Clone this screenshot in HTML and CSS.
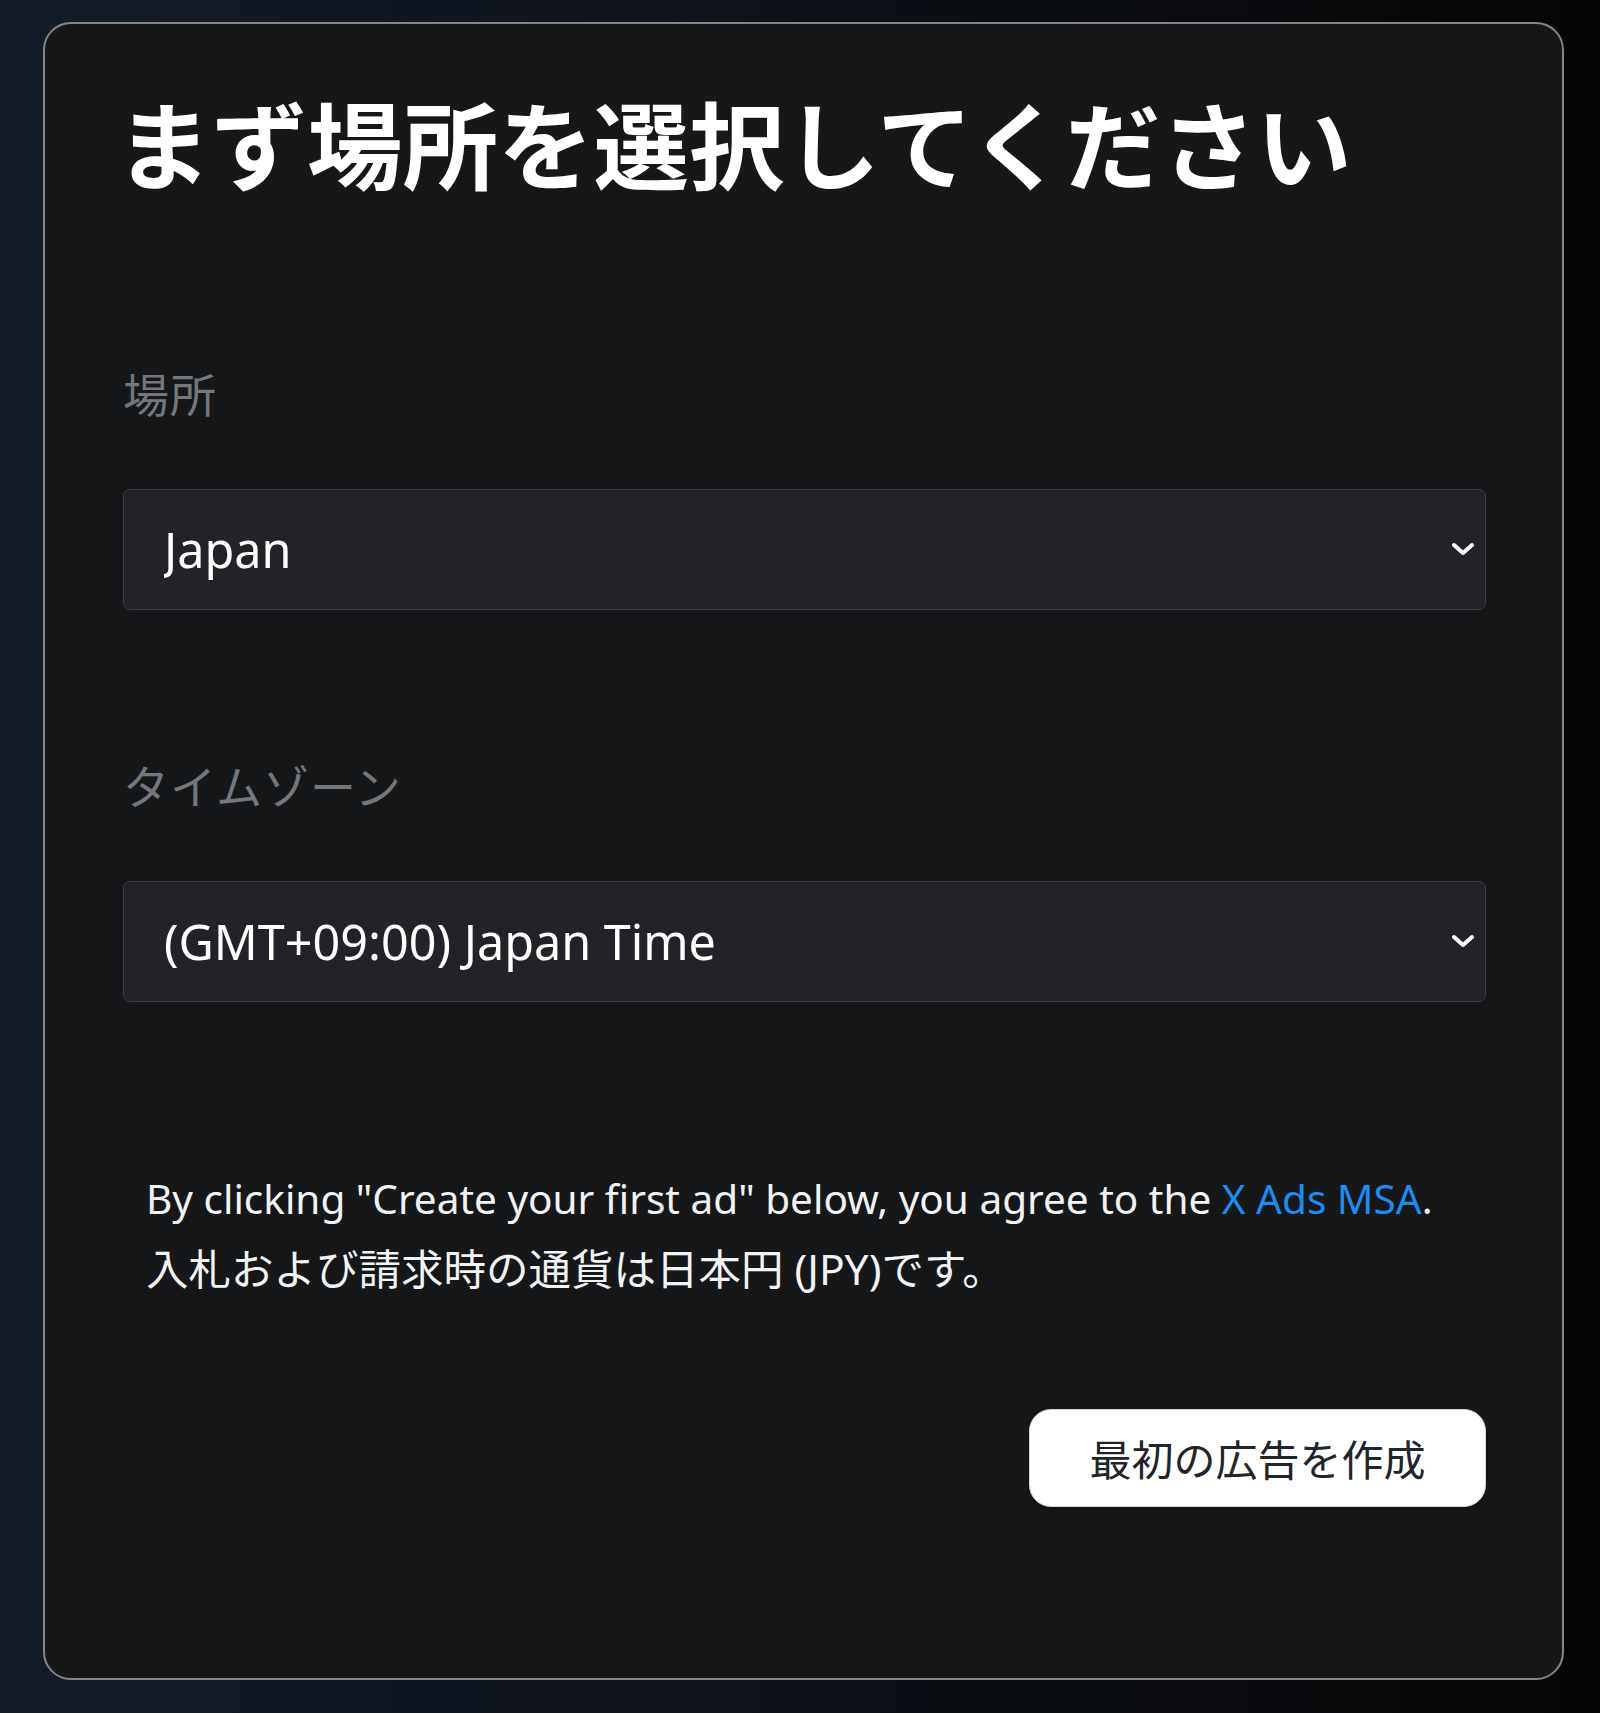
FILE: index.html
```html
<!DOCTYPE html>
<html lang="ja">
<head>
    <meta charset="UTF-8">
    <meta name="viewport" content="width=device-width, initial-scale=1.0">
    <title>場所を選択</title>
    <link rel="stylesheet" href="styles.css">
</head>
<body>

    <div class="card">
        <h1 class="title">まず場所を選択してください</h1>

        <div class="field">
            <label class="field-label" for="location">場所</label>
            <div class="select-wrap">
                <select id="location" class="select">
                    <option>Japan</option>
                </select>
                <svg class="chevron" viewBox="0 0 24 14" width="24" height="14">
                    <path d="M3 3 L12 11 L21 3" fill="none" stroke="#fff" stroke-width="4" stroke-linecap="round" stroke-linejoin="round"/>
                </svg>
            </div>
        </div>

        <div class="field">
            <label class="field-label" for="timezone">タイムゾーン</label>
            <div class="select-wrap">
                <select id="timezone" class="select">
                    <option>(GMT+09:00) Japan Time</option>
                </select>
                <svg class="chevron" viewBox="0 0 24 14" width="24" height="14">
                    <path d="M3 3 L12 11 L21 3" fill="none" stroke="#fff" stroke-width="4" stroke-linecap="round" stroke-linejoin="round"/>
                </svg>
            </div>
        </div>

        <p class="terms">
            By clicking "Create your first ad" below, you agree to the <a href="#" class="terms-link">X Ads MSA</a>.<br>
            <span class="terms-ja">入札および請求時の通貨は日本円 (JPY)です。</span>
        </p>

        <div class="actions">
            <button class="create-btn">最初の広告を作成</button>
        </div>
    </div>

</body>
</html>
```

FILE: styles.css
```css
html, body {
    margin: 0;
}

body {
    min-height: 1713px;
    box-sizing: border-box;
    padding: 22px 36px 0 43px;
    background: linear-gradient(90deg, #141c29, #050505);
    font-family: "Noto Sans", "Noto Sans CJK JP", sans-serif;
    color: #f1f3f5;
}

.card {
    border: 2px solid #858585;
    border-radius: 28px;
    background: #161719;
    padding: 61px 76px 171px 78px;
}

.title {
    margin: 0 0 158px -7px;
    font-family: "Noto Sans CJK JP", sans-serif;
    font-size: 95.5px;
    font-weight: 700;
    line-height: 1.2;
    color: #ffffff;
}

.field {
    margin-bottom: 140px;
}

.field-label {
    display: block;
    margin-bottom: 62px;
    font-family: "Noto Sans CJK JP", sans-serif;
    font-size: 46px;
    line-height: 1.5;
    letter-spacing: 1px;
    color: #74777b;
}

.select-wrap {
    position: relative;
}

.select {
    display: block;
    width: 100%;
    height: 121px;
    box-sizing: border-box;
    padding: 0 80px 0 40px;
    appearance: none;
    -webkit-appearance: none;
    background: #212327;
    border: 1px solid #3a3d41;
    border-radius: 7px;
    color: #ffffff;
    font-family: "Noto Sans", sans-serif;
    font-size: 48.5px;
}

.chevron {
    position: absolute;
    right: 11px;
    top: 53px;
}

.terms {
    margin: 162px 0 104px;
    padding-left: 23px;
    font-size: 40.5px;
    line-height: 70px;
    color: #f1f3f5;
}

.terms-ja {
    font-size: 42.5px;
}

.terms-link {
    color: #1d8cf0;
    text-decoration: none;
}

.actions {
    display: flex;
    justify-content: flex-end;
}

.create-btn {
    width: 457px;
    height: 98px;
    border: 1px solid #d8d8d8;
    border-radius: 22px;
    background: #ffffff;
    color: #212529;
    font-family: "Noto Sans CJK JP", sans-serif;
    font-size: 42px;
    box-shadow: 0 2px 3px rgba(0, 0, 0, 0.35);
    cursor: pointer;
}
```
